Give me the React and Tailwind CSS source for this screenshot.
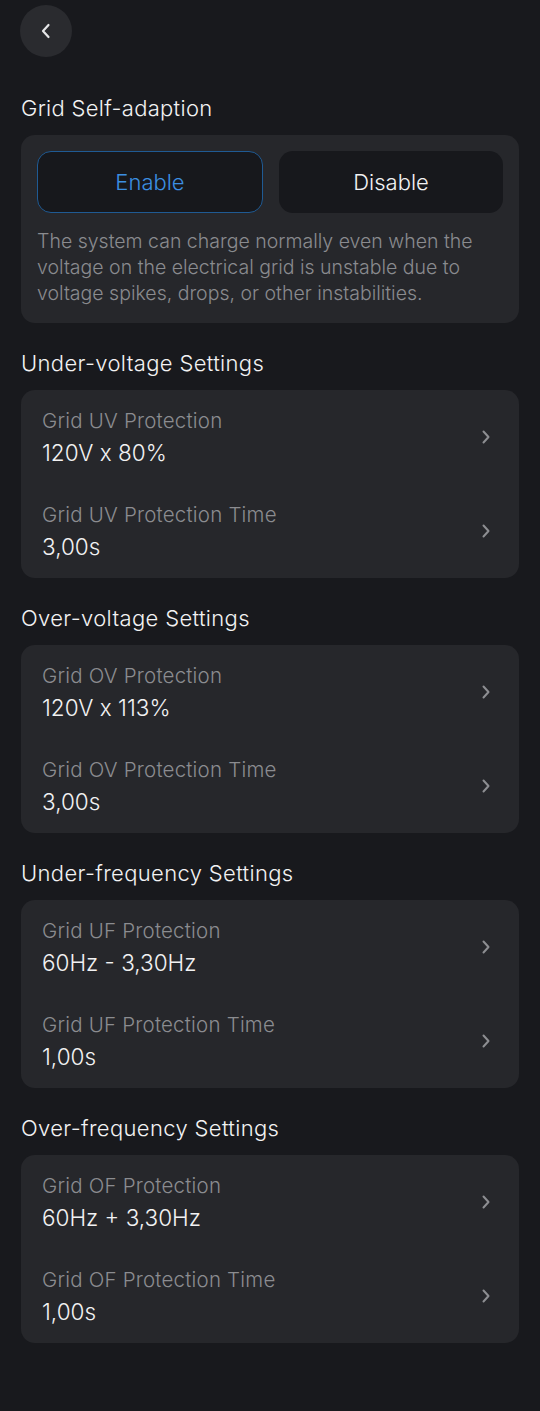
import React from "react";

const Chevron = () => (
  <svg width="10" height="16" viewBox="0 0 10 16" fill="none">
    <path d="M2.5 2.5 L7.5 8 L2.5 13.5" stroke="#8d8e92" strokeWidth="2" strokeLinecap="round" strokeLinejoin="round" />
  </svg>
);

const sections = [
  {
    title: "Under-voltage Settings",
    items: [
      ["Grid UV Protection", "120V x 80%"],
      ["Grid UV Protection Time", "3,00s"],
    ],
  },
  {
    title: "Over-voltage Settings",
    items: [
      ["Grid OV Protection", "120V x 113%"],
      ["Grid OV Protection Time", "3,00s"],
    ],
  },
  {
    title: "Under-frequency Settings",
    items: [
      ["Grid UF Protection", "60Hz - 3,30Hz"],
      ["Grid UF Protection Time", "1,00s"],
    ],
  },
  {
    title: "Over-frequency Settings",
    items: [
      ["Grid OF Protection", "60Hz + 3,30Hz"],
      ["Grid OF Protection Time", "1,00s"],
    ],
  },
];

export default function App() {
  return (
    <div
      className="min-h-[1411px] w-[540px] bg-[#18191d] px-[21px] pt-[5px] pb-[60px] font-light text-white"
      style={{ fontFamily: "Inter, 'Open Sans', sans-serif" }}
    >
      <button className="ml-[-1px] flex h-[52px] w-[52px] items-center justify-center rounded-full bg-[#2a2b2f]">
        <svg width="12" height="18" viewBox="0 0 12 18" fill="none">
          <path d="M8.5 3 L3 9 L8.5 15" stroke="#e6e6e8" strokeWidth="2.2" strokeLinecap="round" strokeLinejoin="round" />
        </svg>
      </button>

      <h2 className="mt-[37px] text-[22px] leading-[28px] tracking-[0.3px] text-[#f2f2f3]">Grid Self-adaption</h2>
      <div className="mt-[13px] rounded-[14px] bg-[#26272b] p-[16px] pb-[17px]">
        <div className="flex gap-[16px]">
          <button className="flex h-[62px] flex-1 items-center justify-center rounded-[14px] border-[1.5px] border-[#1f5a93] bg-[#17181c] text-[22px] font-light text-[#3c8fe2]">
            Enable
          </button>
          <button className="flex h-[62px] flex-1 items-center justify-center rounded-[14px] bg-[#17181c] text-[22px] font-light text-[#f2f2f3]">
            Disable
          </button>
        </div>
        <p className="mt-[15px] text-[19.5px] leading-[26px] text-[#8a8b8f]">
          The system can charge normally even when the voltage on the electrical grid is unstable due to voltage spikes, drops, or other instabilities.
        </p>
      </div>

      {sections.map((s) => (
        <div key={s.title}>
          <h2 className="mt-[26px] text-[22px] leading-[28px] tracking-[0.35px] text-[#f2f2f3]">{s.title}</h2>
          <div className="mt-[13px] rounded-[14px] bg-[#26272b]">
            {s.items.map(([label, value]) => (
              <div key={label} className="flex h-[94px] items-center justify-between pl-[21px] pr-[28px]">
                <div className="flex flex-col">
                  <span className="text-[20.5px] leading-[28px] tracking-[0.2px] text-[#8b8c90]">{label}</span>
                  <span className="mt-[3px] text-[22.5px] leading-[30px] text-[#f2f2f3]">{value}</span>
                </div>
                <Chevron />
              </div>
            ))}
          </div>
        </div>
      ))}
    </div>
  );
}
